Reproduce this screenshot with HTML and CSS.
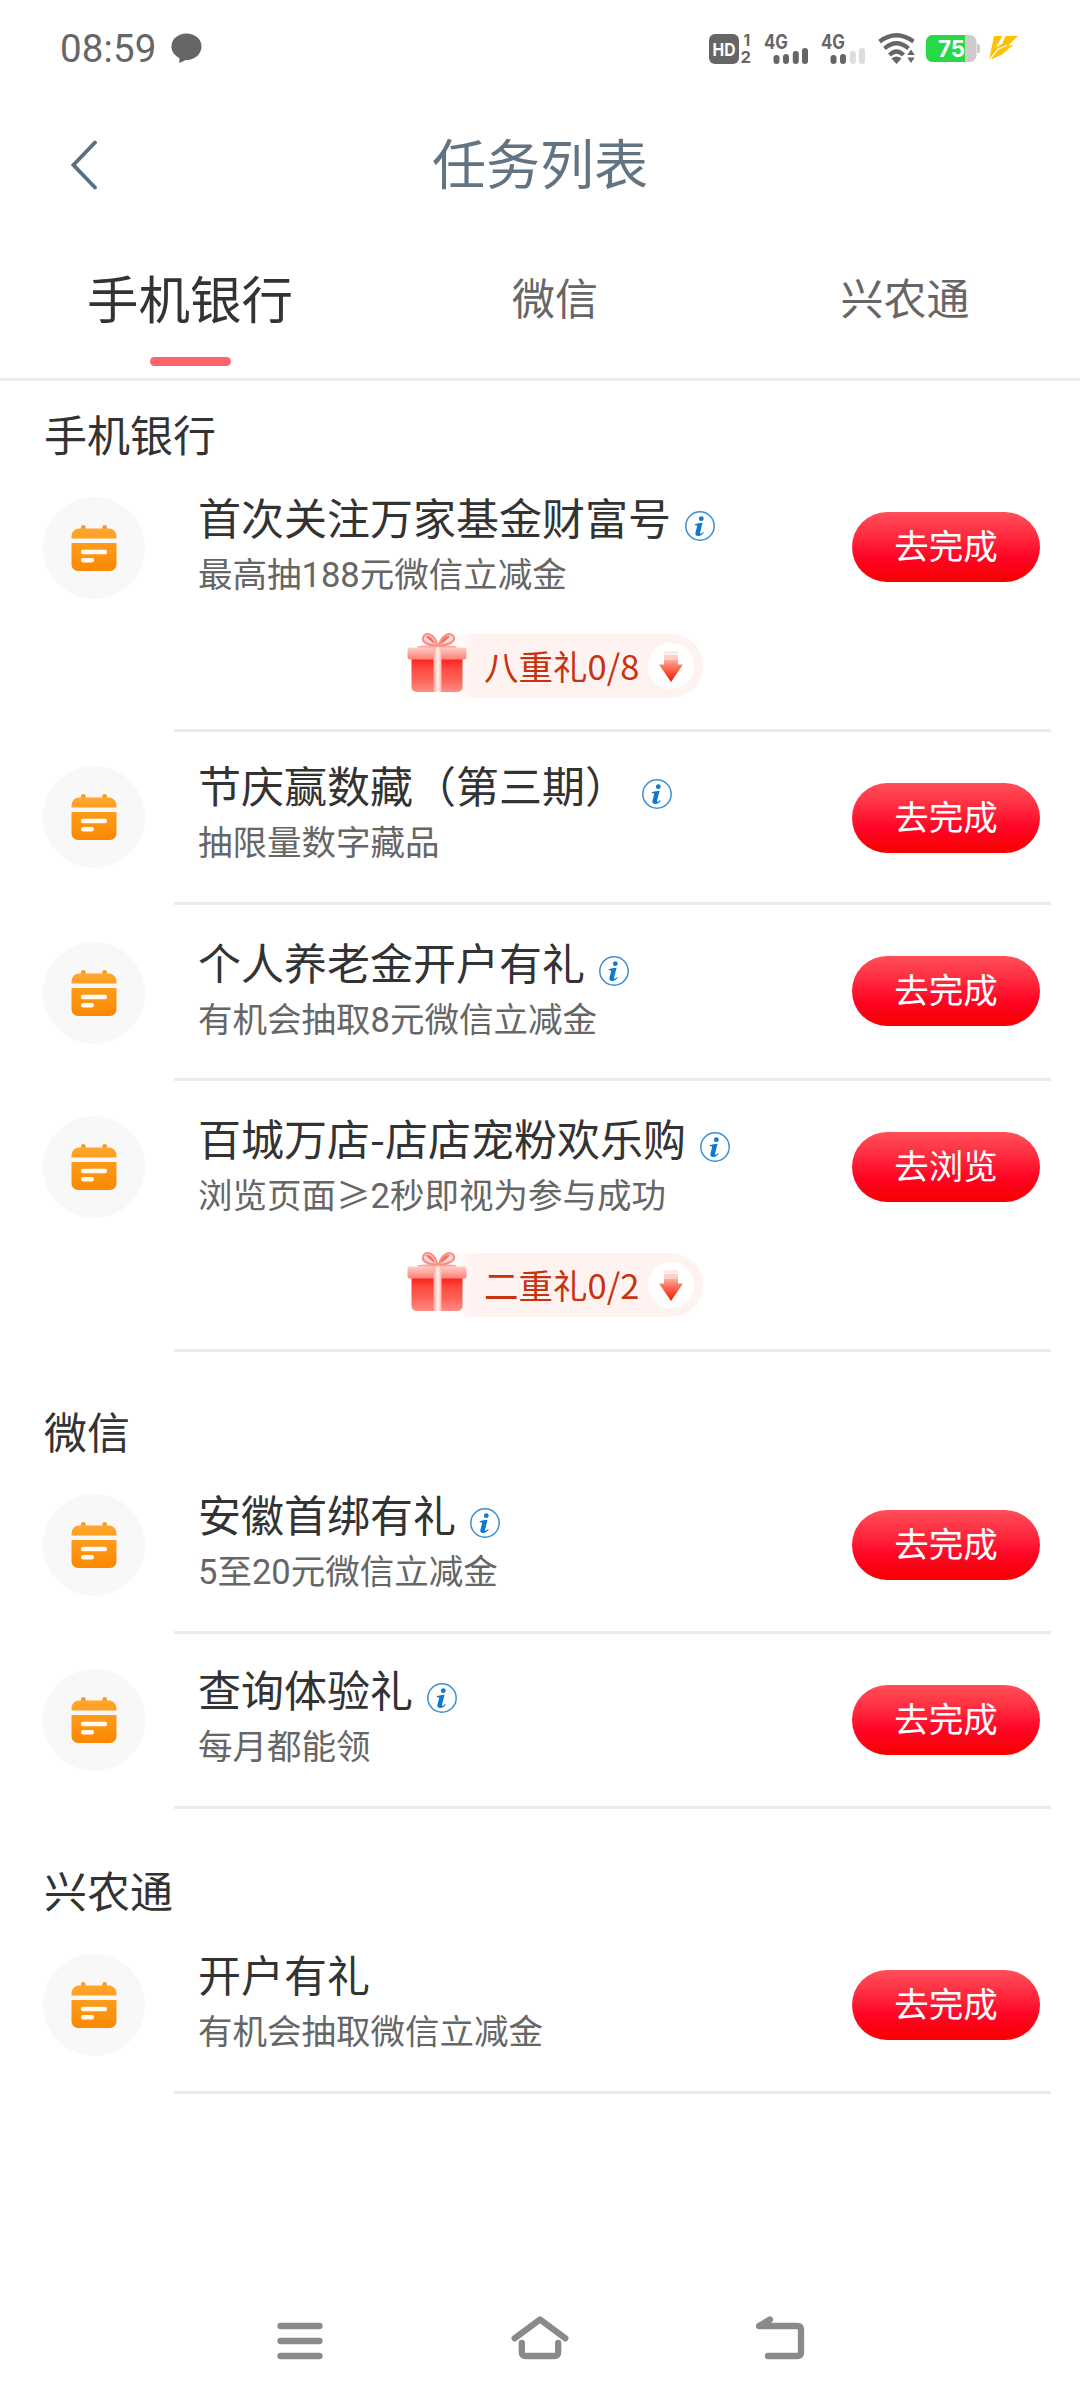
FILE: index.html
```html
<!DOCTYPE html>
<html lang="zh-CN">
<head>
<meta charset="utf-8">
<title>任务列表</title>
<link rel="stylesheet" href="styles.css">
</head>
<body>
<svg class="defs" width="0" height="0" aria-hidden="true">
  <defs>
    <linearGradient id="orange" x1="0" y1="0" x2="0" y2="1"><stop offset="0" stop-color="#ffa62b"/><stop offset="1" stop-color="#fb8800"/></linearGradient>
    <linearGradient id="box" x1="0" y1="0" x2="0" y2="1"><stop offset="0" stop-color="#fb1e18"/><stop offset=".3" stop-color="#fd4a40"/><stop offset=".6" stop-color="#fd5f54"/><stop offset="1" stop-color="#fd8d85"/></linearGradient>
    <linearGradient id="lid" x1="0" y1="0" x2="0" y2="1"><stop offset="0" stop-color="#fecdc6"/><stop offset="1" stop-color="#fc8074"/></linearGradient>
    <linearGradient id="ribbon" x1="0" y1="0" x2="1" y2="0"><stop offset="0" stop-color="#fda79e"/><stop offset=".55" stop-color="#fff1ee"/><stop offset="1" stop-color="#fdb3ab"/></linearGradient>
    <linearGradient id="down" x1="0" y1="0" x2="0" y2="1"><stop offset="0" stop-color="#fbb3a4"/><stop offset=".3" stop-color="#f87a66"/><stop offset="1" stop-color="#f01800"/></linearGradient>
    <symbol id="calendar" viewBox="0 0 46 47">
      <rect x="10" y="0" width="4.6" height="8" rx="2.3" fill="#f49a2c"/>
      <rect x="31.4" y="0" width="4.6" height="8" rx="2.3" fill="#f49a2c"/>
      <path d="M.5 13.500V11a7.500 7.500 0 0 1 7.500-7.500h30a7.500 7.500 0 0 1 7.500 7.500v2.500zM.5 18h45v21.500a6.500 6.500 0 0 1-6.500 6.500H7a6.500 6.500 0 0 1-6.500-6.500z" fill="url(#orange)"/>
      <rect x="10" y="24.700" width="26" height="4.600" rx="1.800" fill="#fffaf2"/>
      <rect x="10" y="33" width="13" height="4.400" rx="1.800" fill="#fffaf2"/>
    </symbol>
    <symbol id="gift" viewBox="0 0 60 61">
      <path d="M10 14.500c6-1 12-1.500 19-1.500h4c6 0 11 .5 17 1.500l-1.500 1.500H11z" fill="#fda79c"/>
      <path d="M29 13.500C20 13 15 10 16 6 17-.5 27 .5 30 12.500zM33 13.500C42 13 48 9.500 47 5.500 45-.5 36 1 32 12.500z" fill="#fdded9" stroke="#fb8f86" stroke-width="2.200"/>
      <path d="M28 12c-2-6-6-9-9.500-7.500C21 6 24 10 28 12zM33.500 12c2-6 6-9 9.500-7.500C41 6 38 10 33.500 12z" fill="#fb6a5e"/>
      <path d="M4.500 26h51v29a5 5 0 0 1-5 5h-41a5 5 0 0 1-5-5z" fill="url(#box)"/>
      <rect x=".5" y="15.500" width="59" height="12" rx="2.500" fill="url(#lid)"/>
      <rect x="26.500" y="15.500" width="8" height="44.500" fill="url(#ribbon)"/>
    </symbol>
    <symbol id="arrow-down" viewBox="0 0 24 31">
      <rect x="5" y="0" width="14" height="3.500" fill="#fdeae7"/>
      <rect x="5" y="4" width="14" height="4.500" fill="#fbcfc7"/>
      <path d="M5 8.500h14v5h5L12 31 0 13.500h5z" fill="url(#down)"/>
    </symbol>
    <symbol id="info" viewBox="0 0 30 30">
      <circle cx="15" cy="15" r="14.200" fill="none" stroke="#3b8fd3" stroke-width="1.500"/>
      <circle cx="16.300" cy="7.700" r="2.400" fill="#0f78d0"/>
      <path d="M9.800 13.200c2.200-.8 5-1.300 7.800-1.500l-2.500 9.800c-.3 1.300.2 1.500 1 1.100.7-.3 1.300-.9 2-1.600l.7.600c-1.600 2.400-3.600 3.500-5.600 3.500-2.300 0-3.300-1.300-2.700-3.500l1.500-5.900c.3-1.200 0-1.600-2.200-1.500z" fill="#0f78d0"/>
    </symbol>
  </defs>
</svg>

<div class="screen">
  <div class="status-bar">
    <time class="clock">08:59</time>
    <svg class="bubble" width="31" height="31" viewBox="0 0 31 31"><path d="M15.500.500C24 .500 30.500 6 30.500 13.500S24 26.700 16 27c-2.500 0-5 2-7.700 3V25C3.500 22.500.500 18.500.500 13.500.500 6 7 .500 15.500.500z" fill="#666"/></svg>
    <div class="status-icons">
      <svg width="43" height="32" viewBox="0 0 43 32" class="st-text"><rect y="1" width="30" height="30" rx="6" fill="#666"/><text x="3.500" y="22.500" font-size="18" textLength="23" lengthAdjust="spacingAndGlyphs">HD</text><text x="34.500" y="12.500" font-size="15.500">1</text><text x="31.500" y="30" font-size="16.500" textLength="10.500" lengthAdjust="spacingAndGlyphs">2</text></svg>
      <svg width="45" height="32" viewBox="0 0 45 32" class="st-text"><text x="0" y="15.500" font-size="19.500" textLength="24" lengthAdjust="spacingAndGlyphs">4G</text><path d="M12.500 25v3M22 24v4M31.800 21v7M41 18v10" stroke="#666" stroke-width="6" stroke-linecap="round"/></svg>
      <svg width="45" height="32" viewBox="0 0 45 32" class="st-text"><text x="0" y="15.500" font-size="19.500" textLength="24" lengthAdjust="spacingAndGlyphs">4G</text><path d="M12.500 25v3M22 24v4" stroke="#666" stroke-width="6" stroke-linecap="round"/><path d="M31.800 21v7M41 18v10" stroke="#ddd" stroke-width="6" stroke-linecap="round"/></svg>
      <svg class="wifi" width="38" height="31" viewBox="0 0 38 31"><g fill="none" stroke="#666" stroke-width="4.200"><path d="M1.500 8.500Q18.500-4 35.500 8.500"/><path d="M6.500 15.500Q18.500 5 30.500 15.500"/><path d="M11.500 22Q18.500 15 25.500 22"/></g><path d="M13.500 25.500Q18.500 21.500 23.500 25.500L18.500 31z" fill="#666"/><path d="M33 16.500l3.700 5.500h-7.400zM33 30l3.700-5.500h-7.400z" fill="#666"/></svg>
      <svg class="battery" width="54" height="28" viewBox="0 0 54 28"><rect width="50.500" height="27" rx="6.500" fill="#ccc"/><path d="M51 9h1a2 2 0 0 1 2 2v5a2 2 0 0 1-2 2h-1z" fill="#ccc"/><path d="M6.500 0H39v27H6.500A6.500 6.500 0 0 1 0 20.500v-14A6.500 6.500 0 0 1 6.500 0z" fill="#27d847"/><text x="12" y="22" font-size="23" textLength="27" lengthAdjust="spacingAndGlyphs">75</text></svg>
      <svg class="bolt" width="31" height="25" viewBox="0 0 31 25"><path d="M6 0H14.500L8 11l6-3 3.500-8H30L20 9.500l5-.5L14 18.500 1 24.500z" fill="#fcc203"/><path d="M1 24.500L10 13l9-3.500" fill="none" stroke="#fff" stroke-width="1.300"/></svg>
    </div>
  </div>

  <header class="title-bar">
    <svg class="back" width="28" height="50" viewBox="0 0 28 50"><path d="M24 2.500L2.500 25 24 47.500" fill="none" stroke="#587080" stroke-width="3.800" stroke-linecap="round"/></svg>
    <h1>任务列表</h1>
  </header>

  <nav class="tabs">
    <a class="tab active">手机银行</a>
    <a class="tab">微信</a>
    <a class="tab">兴农通</a>
  </nav>

  <main>
    <h2 class="section first">手机银行</h2>
    <article class="task with-reward">
      <div class="avatar"><svg width="46" height="47"><use href="#calendar"/></svg></div>
      <div class="body">
        <div class="text"><h3>首次关注万家基金财富号<svg class="info" width="30" height="30"><use href="#info"/></svg></h3><p>最高抽188元微信立减金</p></div>
        <button class="go">去完成</button>
        <div class="reward"><svg class="gift" width="60" height="61"><use href="#gift"/></svg><div class="pill"><span>八重礼0/8</span><i class="knob"><svg width="24" height="31"><use href="#arrow-down"/></svg></i></div></div>
      </div>
    </article>
    <article class="task">
      <div class="avatar"><svg width="46" height="47"><use href="#calendar"/></svg></div>
      <div class="body">
        <div class="text"><h3>节庆赢数藏（第三期）<svg class="info" width="30" height="30"><use href="#info"/></svg></h3><p>抽限量数字藏品</p></div>
        <button class="go">去完成</button>
      </div>
    </article>
    <article class="task">
      <div class="avatar"><svg width="46" height="47"><use href="#calendar"/></svg></div>
      <div class="body">
        <div class="text"><h3>个人养老金开户有礼<svg class="info" width="30" height="30"><use href="#info"/></svg></h3><p>有机会抽取8元微信立减金</p></div>
        <button class="go">去完成</button>
      </div>
    </article>
    <article class="task with-reward">
      <div class="avatar"><svg width="46" height="47"><use href="#calendar"/></svg></div>
      <div class="body">
        <div class="text"><h3>百城万店-店店宠粉欢乐购<svg class="info" width="30" height="30"><use href="#info"/></svg></h3><p>浏览页面<span class="cjk">≥</span>2秒即视为参与成功</p></div>
        <button class="go">去浏览</button>
        <div class="reward"><svg class="gift" width="60" height="61"><use href="#gift"/></svg><div class="pill"><span>二重礼0/2</span><i class="knob"><svg width="24" height="31"><use href="#arrow-down"/></svg></i></div></div>
      </div>
    </article>

    <h2 class="section">微信</h2>
    <article class="task">
      <div class="avatar"><svg width="46" height="47"><use href="#calendar"/></svg></div>
      <div class="body">
        <div class="text"><h3>安徽首绑有礼<svg class="info" width="30" height="30"><use href="#info"/></svg></h3><p>5至20元微信立减金</p></div>
        <button class="go">去完成</button>
      </div>
    </article>
    <article class="task">
      <div class="avatar"><svg width="46" height="47"><use href="#calendar"/></svg></div>
      <div class="body">
        <div class="text"><h3>查询体验礼<svg class="info" width="30" height="30"><use href="#info"/></svg></h3><p>每月都能领</p></div>
        <button class="go">去完成</button>
      </div>
    </article>

    <h2 class="section last">兴农通</h2>
    <article class="task">
      <div class="avatar"><svg width="46" height="47"><use href="#calendar"/></svg></div>
      <div class="body">
        <div class="text"><h3>开户有礼</h3><p>有机会抽取微信立减金</p></div>
        <button class="go">去完成</button>
      </div>
    </article>
  </main>

  <footer class="system-nav">
    <svg width="60" height="50" viewBox="0 0 60 50"><path d="M10.500 11h39M10.500 26h39M10.500 41h39"/></svg>
    <svg width="60" height="50" viewBox="0 0 60 50"><path d="M4.700 23.300L30 4.500 55.300 23.300M11.800 28v9q0 4 4 4h28.400q4 0 4-4v-9"/></svg>
    <svg width="60" height="50" viewBox="0 0 60 50"><path d="M18 41h29.500q3.500 0 3.500-3.500v-23q0-3.500-3.500-3.500H9l11-6.500"/></svg>
  </footer>
</div>
</body>
</html>
```
FILE: styles.css
```css
* { box-sizing: border-box; }
body {
  margin: 0;
  background: #fff;
  color: #333;
  font-family: "Noto Sans CJK SC", sans-serif;
}
h1, h2, h3, p { margin: 0; font-weight: 400; }
svg { display: block; flex: none; }
.defs { position: absolute; }
.screen { width: 1080px; height: 2404px; display: flex; flex-direction: column; overflow: hidden; }

.status-bar { height: 96px; display: flex; align-items: center; padding: 1px 61px 0 60px; flex: none; }
.clock { font: 38.500px/40px Roboto, sans-serif; color: #666; letter-spacing: 0.100px; }
.bubble { margin-left: 15px; }
.status-icons { display: flex; align-items: center; margin-left: auto; }
.status-icons svg { overflow: visible; }
.status-icons svg + svg { margin-left: 12px; }
.status-icons svg + .battery { margin-left: 10px; }
.status-icons svg + .bolt { margin-left: 8px; }
.status-icons text { font-family: Inter, sans-serif; font-weight: 700; }
.st-text text { fill: #666; }
.st-text rect + text, .battery text { fill: #fff; }

.title-bar { height: 136px; display: grid; grid-template-columns: 140px 1fr 140px; align-items: center; flex: none; }
.back { margin-left: 71px; margin-top: 2px; }
h1 { font-size: 54px; line-height: 60px; padding-bottom: 4px; text-align: center; color: #627482; }

.tabs { height: 149px; display: grid; grid-template-columns: 380px 350px 350px; border-bottom: 3px solid #ededed; flex: none; }
.tab { display: flex; flex-direction: column; align-items: center; padding-top: 29px; font-size: 43px; line-height: 70px; color: #666; }
.tab.active { font-size: 51.500px; padding-top: 30px; color: #333; }
.tab.active::after { content: ""; width: 81px; height: 9px; margin-top: 25px; border-radius: 5px; background: #ff646b; }

.section { display: flex; align-items: flex-end; height: 107px; padding: 0 44px 7px; font-size: 43px; line-height: 44px; }
.section.first { height: 81px; }
.section.last { height: 110px; padding-bottom: 8px; }

.task { display: grid; grid-template-columns: 174px 877px; height: 175px; }
.with-reward { height: 270px; }
.with-reward + .task { height: 173px; }
.with-reward + .task + .task { height: 176px; }
.with-reward + .task .avatar { margin-top: 34px; }
.with-reward + .task .text { padding-top: 24px; }
.with-reward + .task .go { margin-top: 49px; }
.with-reward + .task + .task .avatar { margin-top: 37px; }
.with-reward + .task + .task .text { padding-top: 28px; }
.with-reward + .task + .task .go { margin-top: 51px; }
.avatar { display: flex; align-items: center; justify-content: center; width: 102px; height: 102px; margin: 35px 0 0 43px; border-radius: 50%; background: #f8f8f8; }
.avatar svg { margin-top: 1px; }
.body { display: grid; grid-template-columns: 1fr 188px; grid-template-rows: 170px 1fr; padding: 0 11px 0 24px; border-bottom: 3px solid #ebebeb; }
.with-reward .body { grid-template-rows: 158px 1fr; }
.text { padding-top: 26px; white-space: nowrap; }
h3 { display: flex; align-items: center; font-size: 43px; line-height: 56px; }
.info { margin: 20px 0 0 14px; }
p { font-family: Roboto, "Noto Sans CJK SC", sans-serif; font-size: 34.500px; line-height: 48px; margin-top: 7px; color: #666; }
.cjk { font-family: "Noto Sans CJK SC", sans-serif; line-height: 1; }
.go { width: 188px; height: 70px; margin-top: 50px; padding: 0 0 6px; border: 0; border-radius: 35px; background: linear-gradient(#ff4f58, #ff3043 30%, #ff0424 65%, #f80000); color: #fff; font: 34.500px/60px "Noto Sans CJK SC", sans-serif; }
.task:not(.with-reward) .go { margin-top: 51px; }
.task:nth-of-type(4) { height: 271px; }
.task:nth-of-type(4) .go { margin-top: 51px; }
.task:nth-of-type(4) .text { padding-top: 28px; }

.reward { grid-column: 1 / -1; display: flex; align-items: flex-start; padding-left: 209px; padding-top: 12px; }
.pill { display: flex; align-items: center; width: 250px; height: 64px; margin: 2px 0 0 -14px; padding: 0 9px 0 31px; border-radius: 0 32px 32px 0; background: linear-gradient(90deg, #fff, #fff3f2 20px); color: #c8320f; font-size: 34.500px; line-height: 60px; white-space: nowrap; }
.pill span { padding-bottom: 3px; }
.gift { position: relative; z-index: 1; }
.knob { display: flex; align-items: center; justify-content: center; width: 46px; height: 46px; margin-left: auto; border-radius: 50%; background: #fff; }

.system-nav { display: flex; justify-content: center; margin-top: auto; padding-bottom: 39px; gap: 180px; }
.system-nav path { fill: none; stroke: #8a8a8a; stroke-width: 6.300; stroke-linecap: round; stroke-linejoin: round; }
```
